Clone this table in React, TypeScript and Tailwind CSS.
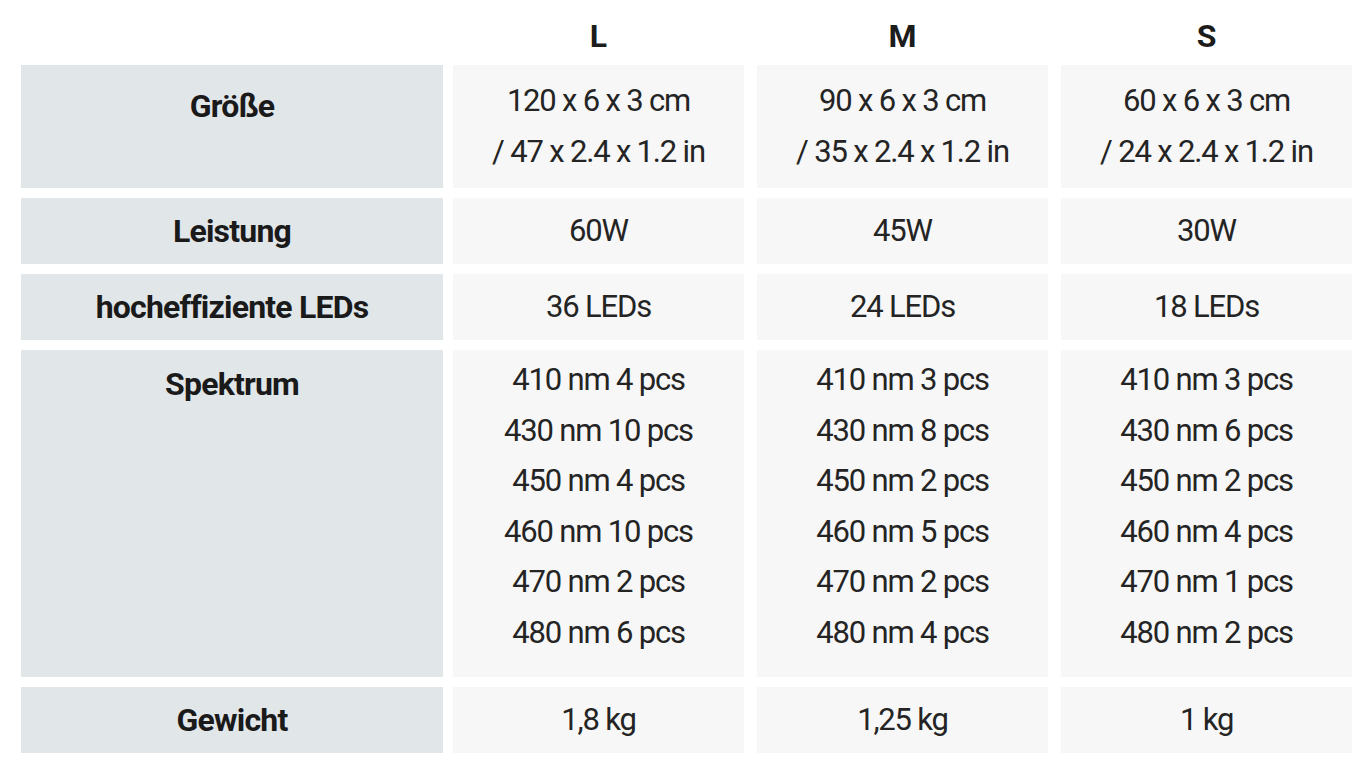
const sizes = ["L", "M", "S"];

type Row = {
  label: string;
  values: string[][];
  height: string;
  labelPad?: string; // top padding for labels that sit high instead of centred
  valuePad?: string;
};

const rows: Row[] = [
  {
    label: "Größe",
    values: [
      ["120 x 6 x 3 cm", "/ 47 x 2.4 x 1.2 in"],
      ["90 x 6 x 3 cm", "/ 35 x 2.4 x 1.2 in"],
      ["60 x 6 x 3 cm", "/ 24 x 2.4 x 1.2 in"],
    ],
    height: "h-[123px]",
    labelPad: "pt-[16px]",
  },
  { label: "Leistung", values: [["60W"], ["45W"], ["30W"]], height: "h-[66px]" },
  { label: "hocheffiziente LEDs", values: [["36 LEDs"], ["24 LEDs"], ["18 LEDs"]], height: "h-[66px]" },
  {
    label: "Spektrum",
    values: [
      ["410 nm 4 pcs", "430 nm 10 pcs", "450 nm 4 pcs", "460 nm 10 pcs", "470 nm 2 pcs", "480 nm 6 pcs"],
      ["410 nm 3 pcs", "430 nm 8 pcs", "450 nm 2 pcs", "460 nm 5 pcs", "470 nm 2 pcs", "480 nm 4 pcs"],
      ["410 nm 3 pcs", "430 nm 6 pcs", "450 nm 2 pcs", "460 nm 4 pcs", "470 nm 1 pcs", "480 nm 2 pcs"],
    ],
    height: "h-[327px]",
    labelPad: "pt-[9px]",
    valuePad: "pt-[5px]",
  },
  { label: "Gewicht", values: [["1,8 kg"], ["1,25 kg"], ["1 kg"]], height: "h-[66px]" },
];

const font = "font-['Roboto','Liberation_Sans',sans-serif]";
// columns carry their own right gap (10px after the label, 13px between sizes)
const cols = "grid grid-cols-[432px_304px_304px_291px]";

export default function App() {
  return (
    <div className={`w-[1370px] h-[768px] bg-white pl-[21px] ${font}`}>
      <div className={`${cols} h-[65px]`}>
        <div />
        {sizes.map((s) => (
          <div key={s} className="w-[291px] flex justify-center pt-[11px] text-[32px] leading-[50px] font-bold text-[#1c1c1c]">
            {s}
          </div>
        ))}
      </div>

      <div className="flex flex-col gap-[10px]">
        {rows.map((row) => (
          <div key={row.label} className={`${cols} ${row.height}`}>
            <div
              className={`w-[422px] flex flex-col items-center bg-[#e1e6e9] text-[32px] leading-[50px] font-bold tracking-[-0.025em] text-[#1a1a1a] ${
                row.labelPad ? row.labelPad : "justify-center"
              }`}
            >
              {row.label}
            </div>
            {row.values.map((lines, i) => (
              <div
                key={i}
                className={`w-[291px] flex flex-col items-center bg-[#f7f7f7] text-[31px] leading-[50.5px] tracking-[-0.038em] text-[#242424] ${
                  row.valuePad ? row.valuePad : "justify-center"
                }`}
              >
                {lines.map((l) => (
                  <span key={l}>{l}</span>
                ))}
              </div>
            ))}
          </div>
        ))}
      </div>
    </div>
  );
}
